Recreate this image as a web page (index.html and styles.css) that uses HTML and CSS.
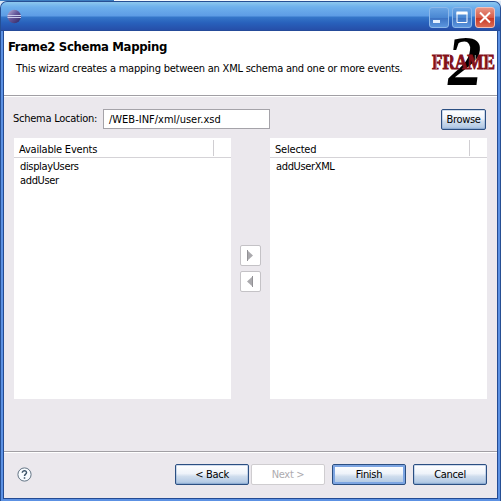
FILE: index.html
```
<!DOCTYPE html>
<html lang="en">
<head>
<meta charset="utf-8">
<title>Frame2 Schema Mapping</title>
<link rel="stylesheet" href="styles.css">
</head>
<body>
<div class="window">
  <div class="titlebar">
    <svg class="app-icon" width="15" height="15" viewBox="0 0 15 15">
      <defs><linearGradient id="orb" x1="0" y1="0" x2="1" y2="1"><stop offset="0" stop-color="#b9b4da"/><stop offset=".45" stop-color="#65589b"/><stop offset="1" stop-color="#2e2461"/></linearGradient></defs>
      <circle cx="7.2" cy="7.500" r="6.700" fill="url(#orb)"/>
      <path d="M0.500 6.500H14M0.500 8.500H14" stroke="#c9cdec" stroke-width="1"/>
    </svg>
    <div class="captions">
      <span class="cap"><svg width="20" height="21"><path d="M4 14.500h7" stroke="#e4f0ff" stroke-width="3"/></svg></span>
      <span class="cap"><svg width="20" height="21"><path d="M5 5.500h10v10h-10z" fill="none" stroke="#fff"/><path d="M4.500 6h11" stroke="#fff" stroke-width="3"/></svg></span>
      <span class="cap close"><svg width="20" height="21"><path d="M5 5.500l10 10M15 5.500l-10 10" stroke="#fff" stroke-width="2"/></svg></span>
    </div>
  </div>
  <div class="client">
    <header class="banner">
      <div class="heading">
        <h1>Frame2 Schema Mapping</h1>
        <p>This wizard creates a mapping between an XML schema and one or more events.</p>
      </div>
      <svg class="logo" width="68" height="62" viewBox="0 0 68 62">
        <text class="two" transform="translate(15.500 54) skewX(-7)" x="0" y="0" textLength="35" lengthAdjust="spacingAndGlyphs">2</text>
        <text class="frame" x="3" y="38" textLength="63" lengthAdjust="spacingAndGlyphs">FRAME</text>
        <path d="M7.200 24v14M20.500 24v14M46.300 24v6M59 24v14" stroke="#fff" stroke-width=".6"/>
      </svg>
    </header>
    <main class="body">
      <div class="location">
        <label class="loc-label">Schema Location:</label>
        <div class="field">/WEB-INF/xml/user.xsd</div>
        <button class="btn browse">Browse</button>
      </div>
      <div class="lists">
        <section class="list">
          <div class="col">Available Events</div>
          <div class="item">displayUsers</div>
          <div class="item">addUser</div>
        </section>
        <div class="movers">
          <span class="move"><svg width="19" height="19"><path d="M6 4v11l6-5.500z" fill="#aaa9ad"/><path d="M6.500 4v11" stroke="#929195"/></svg></span>
          <span class="move"><svg width="19" height="19"><path d="M12 4v11l-6-5.500z" fill="#aaa9ad"/><path d="M11.500 4v11" stroke="#929195"/></svg></span>
        </div>
        <section class="list">
          <div class="col">Selected</div>
          <div class="item">addUserXML</div>
        </section>
      </div>
    </main>
    <footer class="footer">
      <svg class="help" width="15" height="15" viewBox="0 0 15 15"><circle cx="7.500" cy="7.500" r="6.600" fill="#f8fcff" stroke="#647585" stroke-width="1"/><path d="M5.300 5.800C5.300 3 9.700 3.200 9.500 5.700C9.400 7.200 7.500 7 7.500 9M7.500 10.300v1.500" fill="none" stroke="#3e566b" stroke-width="1.500"/></svg>
      <div class="actions">
        <button class="btn">&lt; Back</button>
        <button class="btn disabled">Next &gt;</button>
        <button class="btn finish">Finish</button>
        <button class="btn cancel">Cancel</button>
      </div>
    </footer>
  </div>
</div>
</body>
</html>
```
FILE: styles.css
```
* { box-sizing: border-box; }
body {
  margin: 0;
  width: 501px;
  height: 501px;
  overflow: hidden;
  background: linear-gradient(90deg, #3c7cc0 0 114px, #f4f8fc 114px) 0 0 / 100% 1px no-repeat #d9e7f6;
  font: 11px/14px "DejaVu Sans Condensed", "DejaVu Sans", sans-serif;
  font-stretch: condensed;
  color: #000;
}
.window {
  height: 500px;
  margin-top: 1px;
  border: 1px solid #264f94;
  border-bottom: 0;
  border-radius: 7px 7px 0 0;
  background: #5c91e3;
  padding: 0 2px 2px;
  overflow: hidden;
}
.titlebar {
  height: 29px;
  margin: 0 -2px;
  padding: 5px 5px 0 6px;
  display: flex;
  justify-content: space-between;
  background: linear-gradient(#8dc8ee 0, #6eb0ec 5px, #5d9ce5 14px, #3577c9 15px, #2860bb 21px, #264fa9 28px, #24478b 29px);
}
.app-icon { margin-top: 2px; }
.captions { display: flex; gap: 3px; }
.cap {
  width: 20px;
  height: 21px;
  border: 1px solid #8db8e9;
  border-radius: 3px;
  background: linear-gradient(#69a4e4, #4a87d2 50%, #3c72c2 52%, #5b96de);
}
.cap svg { display: block; margin: -1px; }
.close { border-color: #f0bfb8; background: linear-gradient(#e79484, #d75c49 50%, #c73724 52%, #dc6a53); }
.client {
  height: 468px;
  border: 1px solid #244b93;
  border-top: 0;
  background: #ebe8ed;
  display: flex;
  flex-direction: column;
}
.banner {
  height: 65px;
  background: #fff;
  border-bottom: 1px solid #a19fa4;
  display: flex;
  justify-content: space-between;
}
.heading { padding: 8px 0 0 4px; white-space: nowrap; }
h1 { margin: 0; font-size: 13px; line-height: 16px; font-weight: bold; letter-spacing: -.33px; }
.heading p { margin: 7px 0 0 8px; letter-spacing: -.225px; }
.logo { flex: none; }
.two { font: bold 71px "Liberation Serif", serif; }
.frame { font: bold 21px "Liberation Serif", serif; fill: #84101a; stroke: #84101a; stroke-width: .9px; }
.body {
  flex: 1;
  border-top: 1px solid #fff;
  padding: 11px 10px 0 10px;
}
.location { display: flex; align-items: center; height: 22px; }
.loc-label { width: 90px; margin-left: -1px; white-space: nowrap; letter-spacing: -.25px; }
.field {
  width: 167px;
  height: 20px;
  border: 1px solid #a5a3a9;
  background: #fff;
  padding: 3px 5px 0;
}
.btn {
  width: 74px;
  height: 21px;
  padding: 0 0 1px;
  border: 1px solid #2b4f82;
  border-radius: 2px;
  background: linear-gradient(#fff 0, #eef3fa 45%, #cfdded 60%, #b5cbe5 90%, #93b0d5);
  box-shadow: inset 0 0 0 1px rgba(120, 155, 200, .35);
  font: inherit;
  letter-spacing: -.3px;
  color: #000;
  text-align: center;
}
.browse { width: 45px; padding: 1px 0 0; margin-left: 171px; }
.lists { display: flex; margin-top: 8px; }
.list { width: 217px; height: 261px; background: #fff; }
.col {
  height: 20px;
  border-bottom: 1px solid #d5d3d7;
  background: linear-gradient(#d0ced2, #d0ced2) 199px 2px / 1px 16px no-repeat;
  padding: 5px 5px 0;
  letter-spacing: -.2px;
}
.item { position: relative; top: 1px; padding-left: 6px; height: 14px; line-height: 16px; letter-spacing: -.35px; }
.movers { width: 39px; padding: 107px 0 0 9px; display: flex; flex-direction: column; gap: 5px; }
.move { width: 21px; height: 21px; border: 1px solid #c4c2c6; border-radius: 2px; background: #fff; }
.move svg { display: block; }
.footer {
  height: 47px;
  border-top: 1px solid #a19fa4;
  box-shadow: inset 0 1px #fff;
  display: flex;
  justify-content: space-between;
  padding: 12px 10px 0 13px;
}
.help { margin-top: 3px; }
.actions { display: flex; gap: 2px; }
.btn { padding-top: 1px; padding-bottom: 0; }
.disabled { border-color: #cfcdd0; background: #fff; box-shadow: none; color: #adabaf; }
.finish { margin-left: 5px; box-shadow: inset 0 0 0 2px #7da5e2; }
.cancel { margin-left: 5px; }
```
